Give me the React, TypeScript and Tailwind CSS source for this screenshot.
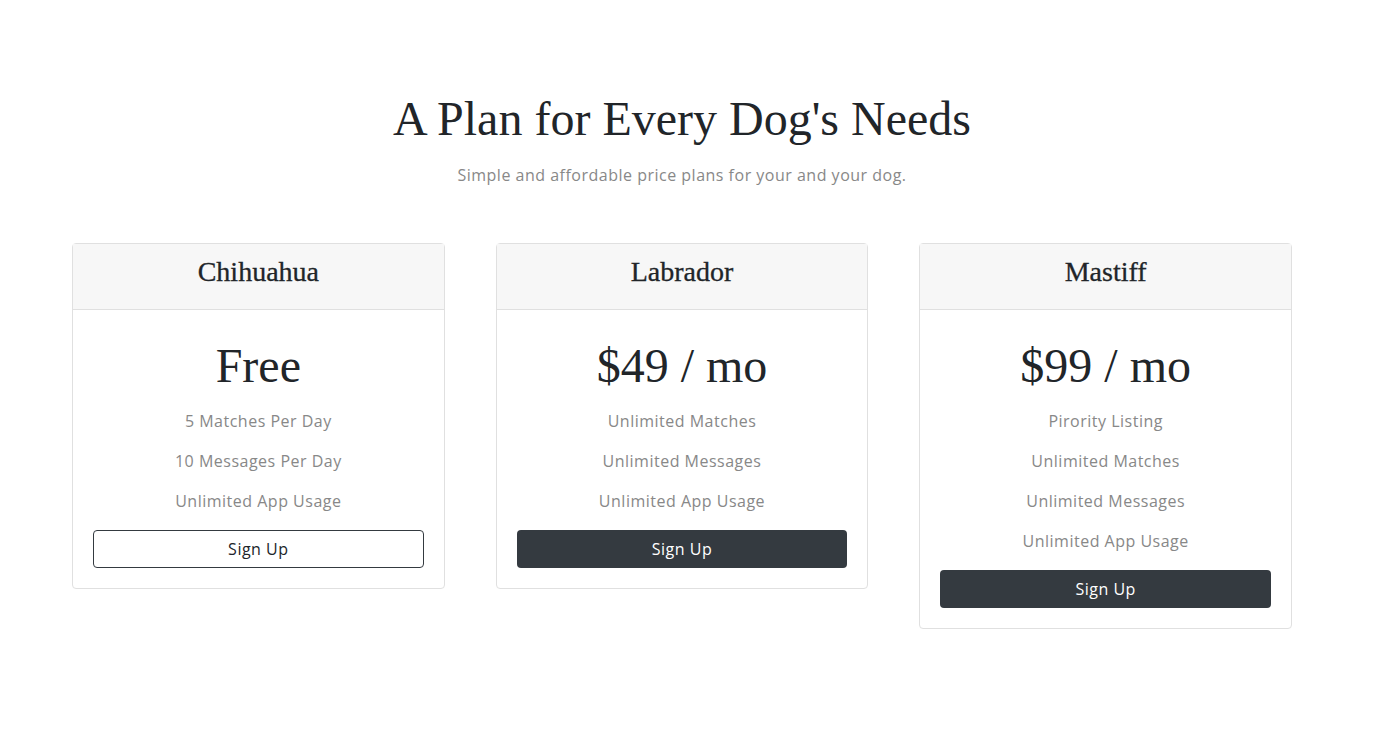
const plans = [
  {
    name: "Chihuahua",
    price: "Free",
    features: ["5 Matches Per Day", "10 Messages Per Day", "Unlimited App Usage"],
    outline: true,
  },
  {
    name: "Labrador",
    price: "$49 / mo",
    features: ["Unlimited Matches", "Unlimited Messages", "Unlimited App Usage"],
    outline: false,
  },
  {
    name: "Mastiff",
    price: "$99 / mo",
    features: [
      "Pirority Listing",
      "Unlimited Matches",
      "Unlimited Messages",
      "Unlimited App Usage",
    ],
    outline: false,
  },
];

const sans = "font-['Open_Sans',sans-serif] tracking-[0.5px]";
const serif = "font-['Liberation_Serif',serif]";

function PlanCard({ plan }: { plan: (typeof plans)[number] }) {
  return (
    <div className="border border-[#e0e0e0] rounded-[4px] bg-white flex flex-col">
      {/* Header */}
      <div className="bg-[#f7f7f7] border-b border-[#e0e0e0] h-[66px] flex justify-center pt-[11px]">
        <h4 className={`${serif} text-[28px] leading-[34px] text-[#212529] [-webkit-text-stroke:0.3px_#212529]`}>
          {plan.name}
        </h4>
      </div>

      {/* Body */}
      <div className="px-5 pt-[27px] pb-5 flex flex-col items-center">
        <h1 className={`${serif} text-[48px] leading-[58px] text-[#212529]`}>
          {plan.price}
        </h1>
        <ul className={`${sans} mt-[6px] mb-[9px] w-full text-center`}>
          {plan.features.map((f) => (
            <li key={f} className="h-10 flex items-center justify-center text-[16px] text-[#888888]">
              {f}
            </li>
          ))}
        </ul>
        <button
          className={`${sans} w-full h-[38px] rounded-[4px] text-[16px] ${
            plan.outline
              ? "border border-[#343a40] text-[#212529] bg-white"
              : "bg-[#343a40] text-white"
          }`}
        >
          Sign Up
        </button>
      </div>
    </div>
  );
}

export default function App() {
  return (
    <div className="min-h-screen bg-white">
      <div className="w-[1220px] ml-[72px] pt-[90px]">
        <h1 className={`${serif} text-center text-[48px] leading-[58px] text-[#212529]`}>
          A Plan for Every Dog's Needs
        </h1>
        <p className={`${sans} text-center text-[16px] leading-6 text-[#888888] mt-[15px]`}>
          Simple and affordable price plans for your and your dog.
        </p>

        <div className="grid grid-cols-3 gap-[51px] mt-[56px] items-start">
          {plans.map((p) => (
            <PlanCard key={p.name} plan={p} />
          ))}
        </div>
      </div>
    </div>
  );
}
